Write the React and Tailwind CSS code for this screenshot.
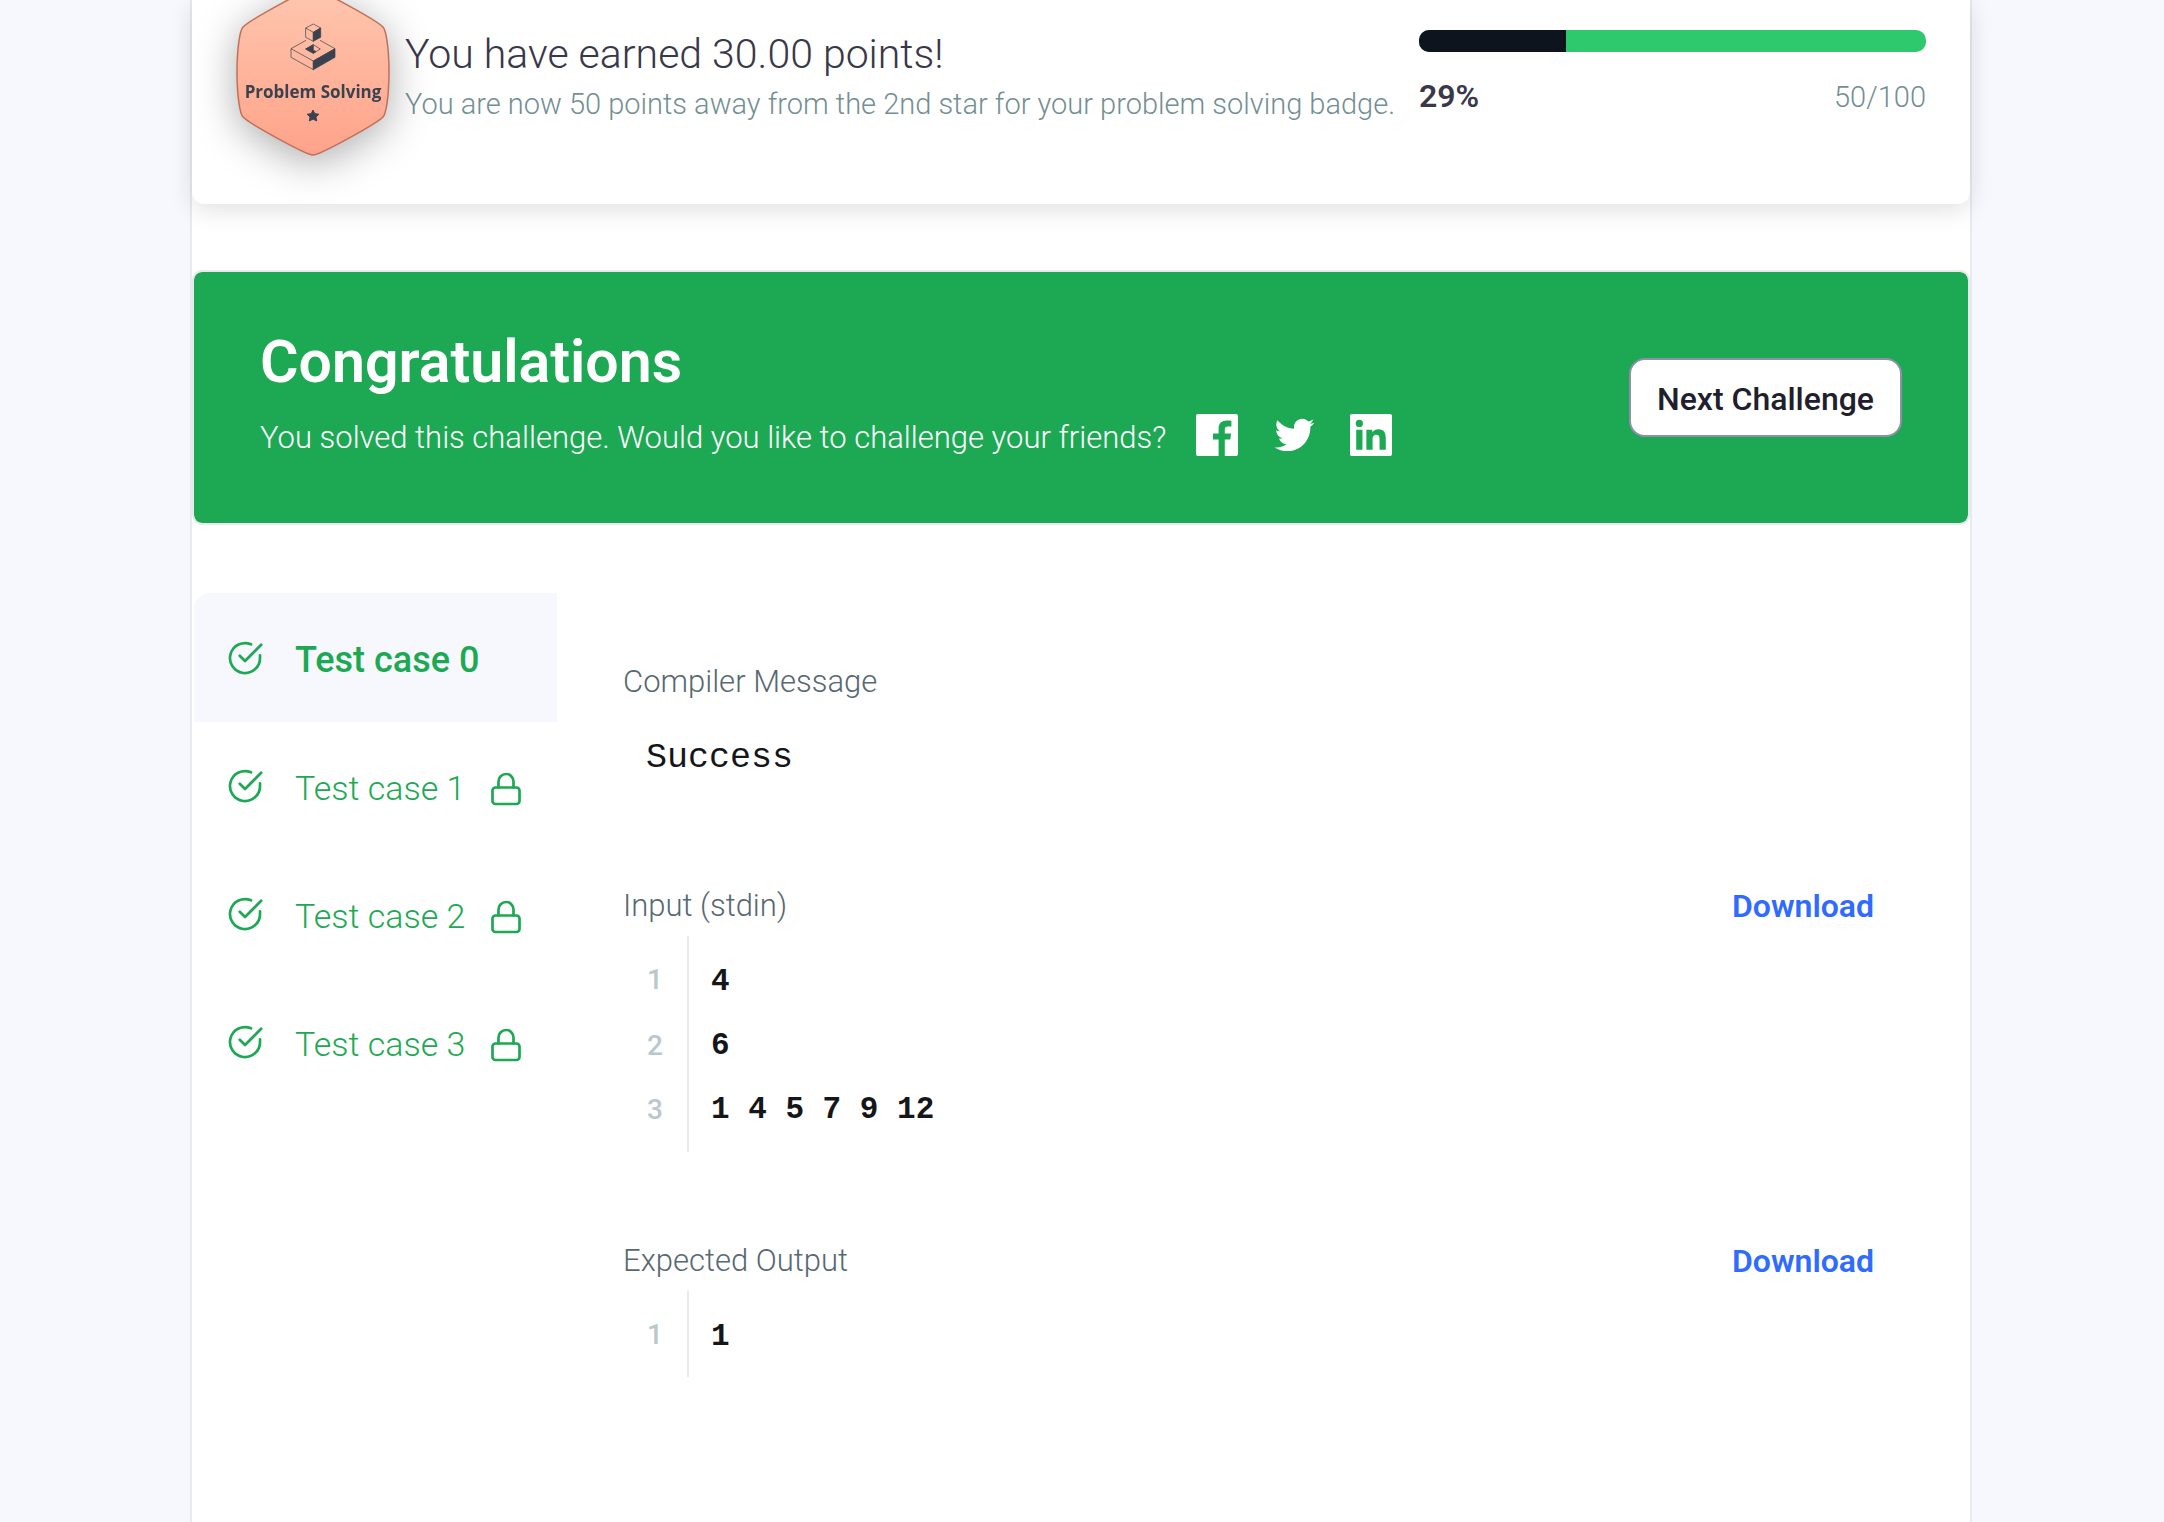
import React from "react";

const TEST_CASES = [
  { name: "Test case 0", active: true },
  { name: "Test case 1", locked: true },
  { name: "Test case 2", locked: true },
  { name: "Test case 3", locked: true },
];

function ProblemSolvingBadge() {
  return (
    <svg
      viewBox="0 0 154 168"
      className="-mt-3 h-[168px] w-[154px] shrink-0 overflow-visible drop-shadow-[0_8px_20px_rgba(0,0,0,0.32)]"
      role="img"
      aria-label="Problem Solving badge, one star"
    >
      <defs>
        <linearGradient id="badge-fill" x1="0" y1="0" x2="0" y2="1">
          <stop offset="0" stopColor="#ffc6ae" />
          <stop offset="1" stopColor="#ffa38a" />
        </linearGradient>
      </defs>
      <path
        d="M77 1C84 1 140 32 147 39C150 42 153 60 153 84C153 108 150 126 147 129C140 136 84 167 77 167C70 167 14 136 7 129C4 126 1 108 1 84C1 60 4 42 7 39C14 32 70 1 77 1Z"
        fill="url(#badge-fill)"
        stroke="#c0705a"
        strokeWidth="1.5"
      />
      <g stroke="#39424e" strokeWidth="0.7" strokeLinejoin="round" fill="none">
        <path d="M70 52.3L55 60.7V69.3L77.3 81.7V73L55 60.7M77.3 73L99 60.7L84 52.3" />
        <path d="M77.3 73L99 60.7V69.3L77.3 81.7Z" fill="#39424e" />
        <path d="M77.3 56.7L84.3 61L77.3 65.3L69.7 61Z" />
        <path d="M77.3 56.7V62L80 63.7L77.3 65.3L69.7 61Z" fill="#39424e" />
        <path d="M77.3 36L84.7 40L77.3 44.3L69.7 40ZM69.7 40V49.3L77.3 53.3V44.3" />
        <path d="M77.3 44.3L84.7 40V49.3L77.3 53.3Z" fill="#39424e" />
      </g>
      <text
        x="77"
        y="110"
        textAnchor="middle"
        fill="#39424e"
        className="font-['Open_Sans',sans-serif] text-[17px] font-bold"
      >
        Problem Solving
      </text>
      <path
        d="M77 122L78.8 125.7L82.9 126.2L79.9 129L80.7 133L77 131L73.3 133L74.1 129L71.1 126.2L75.2 125.7Z"
        fill="#39424e"
        stroke="#39424e"
        strokeLinejoin="round"
      />
    </svg>
  );
}

function FacebookIcon() {
  return (
    <svg viewBox="0 0 42 42" className="size-[42px]" fill="#fff" aria-hidden="true">
      <path d="M2 0H40A2 2 0 0 1 42 2V40A2 2 0 0 1 40 42H28.8V25.6H34.3L35.1 19.4H28.8V15.4C28.8 13.4 29.5 12.4 32 12.4H35.4V6.7C34.8 6.6 32.7 6.4 30.5 6.4C25.7 6.4 22.6 9.3 22.6 14.5V19.4H17V25.6H22.6V42H2A2 2 0 0 1 0 40V2A2 2 0 0 1 2 0Z" />
    </svg>
  );
}

function TwitterIcon() {
  return (
    <svg viewBox="0 0 24 24" className="size-[42px]" fill="#fff" aria-hidden="true">
      <path d="M23.643 4.937c-.835.37-1.732.62-2.675.733.962-.576 1.7-1.49 2.048-2.578-.9.534-1.897.922-2.958 1.13-.85-.904-2.06-1.47-3.4-1.47-2.572 0-4.658 2.086-4.658 4.66 0 .364.042.718.12 1.06-3.873-.195-7.304-2.05-9.602-4.868-.4.69-.63 1.49-.63 2.342 0 1.616.823 3.043 2.072 3.878-.764-.025-1.482-.234-2.11-.583v.06c0 2.257 1.605 4.14 3.737 4.568-.392.106-.803.162-1.227.162-.3 0-.593-.028-.877-.082.593 1.85 2.313 3.198 4.352 3.234-1.595 1.25-3.604 1.995-5.786 1.995-.376 0-.747-.022-1.112-.065 2.062 1.323 4.51 2.093 7.14 2.093 8.57 0 13.255-7.098 13.255-13.254 0-.2-.005-.402-.014-.602.91-.658 1.7-1.477 2.323-2.41z" />
    </svg>
  );
}

function LinkedinIcon() {
  return (
    <svg viewBox="0 0 24 24" className="size-[42px]" fill="#fff" aria-hidden="true">
      <path d="M20.447 20.452h-3.554v-5.569c0-1.328-.027-3.037-1.852-3.037-1.853 0-2.136 1.445-2.136 2.939v5.667H9.351V9h3.414v1.561h.046c.477-.9 1.637-1.85 3.37-1.85 3.601 0 4.267 2.37 4.267 5.455v6.286zM5.337 7.433a2.062 2.062 0 1 1 0-4.125 2.062 2.062 0 0 1 0 4.125zM7.119 20.452H3.555V9h3.564v11.452zM22.8 0H1.2C.5 0 0 .5 0 1.2v21.6c0 .7.5 1.2 1.2 1.2h21.6c.7 0 1.2-.5 1.2-1.2V1.2c0-.7-.5-1.2-1.2-1.2z" />
    </svg>
  );
}

function CheckIcon() {
  return (
    <svg
      viewBox="0 0 24 24"
      className="size-9 shrink-0"
      fill="none"
      stroke="currentColor"
      strokeWidth="1.8"
      strokeLinecap="round"
      strokeLinejoin="round"
      aria-hidden="true"
    >
      <path d="M22 10.3V12A10 10 0 1 1 16 2.9" />
      <path d="M8.5 10.5L12 14L22.8 3.2" />
    </svg>
  );
}

function LockIcon() {
  return (
    <svg
      viewBox="0 0 24 24"
      className="mt-1.5 size-9 shrink-0"
      fill="none"
      stroke="currentColor"
      strokeWidth="1.8"
      strokeLinecap="round"
      strokeLinejoin="round"
      aria-label="Locked"
    >
      <rect x="3" y="11" width="18" height="11" rx="2" />
      <path d="M7 11V7a5 5 0 0 1 10 0v4" />
    </svg>
  );
}

function CodeBlock({ lines }) {
  return (
    <div className="mt-2.5 flex flex-col">
      {lines.map((line, i) => (
        <div key={i} className="group flex items-stretch leading-[64px]">
          <span className="w-[66px] border-r-2 border-[#e4ebee] text-center text-[28px] font-medium text-[#b7c9cc] group-first:pt-3 group-last:pb-2.5">
            {i + 1}
          </span>
          <code className="pl-[22px] font-['Liberation_Mono',monospace] text-[31px] font-bold whitespace-pre text-[#15161a] group-first:pt-3.5 group-last:pb-2">
            {line}
          </code>
        </div>
      ))}
    </div>
  );
}

function IoSection({ title, lines, className }) {
  return (
    <section className={className}>
      <div className="flex items-center justify-between leading-10">
        <h3 className="text-[31px] font-light text-[#576871]">{title}</h3>
        <a href="#download" className="text-[32px] font-semibold text-[#2f6bff]">
          Download
        </a>
      </div>
      <CodeBlock lines={lines} />
    </section>
  );
}

export default function App() {
  return (
    <div className="min-h-screen bg-[#f7f8fe] pr-48 pl-[190px] font-['Roboto',sans-serif]">
      <main className="min-h-screen border-x-2 border-[#e9e9f3] bg-white pb-36">
        <header className="relative flex h-[204px] items-start rounded-b-xl bg-white px-11 shadow-[0_6px_24px_rgba(0,0,0,0.12)]">
          <ProblemSolvingBadge />
          <div className="flex-1 pt-[29px] pl-[15px] leading-[50px] whitespace-nowrap">
            <h1 className="text-[41px] font-light text-[#39374a]">You have earned 30.00 points!</h1>
            <p className="text-[29px] font-light text-[#738f93]">
              You are now 50 points away from the 2nd star for your problem solving badge.
            </p>
          </div>
          <div className="w-[507px] shrink-0 pt-[30px]">
            <div
              role="progressbar"
              aria-label="Progress to the next star"
              aria-valuenow={29}
              aria-valuemin={0}
              aria-valuemax={100}
              className="h-[22px] overflow-hidden rounded-[10px] bg-[#2ec96d]"
            >
              <div className="h-full w-[29%] bg-[#0e141e]" />
            </div>
            <div className="mt-6 flex items-baseline justify-between leading-10">
              <span className="text-[32px] font-semibold text-[#39374a]">29%</span>
              <span className="text-[29px] font-light text-[#738f93]">50/100</span>
            </div>
          </div>
        </header>

        <section className="mt-[66px] flex items-center justify-between rounded-[10px] border-2 border-[#e8e9ef] bg-[#1da954] bg-clip-padding px-[66px] text-white">
          <div className="pt-[54px] pb-[61px]">
            <h2 className="text-[59px] leading-[72px] font-semibold">Congratulations</h2>
            <div className="mt-4 flex items-start">
              <p className="text-[31px] leading-[48px] font-light">
                You solved this challenge. Would you like to challenge your friends?
              </p>
              <div className="ml-[30px] flex gap-[35px]">
                <a href="#facebook" aria-label="Share on Facebook">
                  <FacebookIcon />
                </a>
                <a href="#twitter" aria-label="Share on Twitter">
                  <TwitterIcon />
                </a>
                <a href="#linkedin" aria-label="Share on LinkedIn">
                  <LinkedinIcon />
                </a>
              </div>
            </div>
          </div>
          <button
            type="button"
            className="h-[79px] rounded-2xl border-2 border-[#918fa8] bg-white px-[26px] pt-0.5 text-[32px] font-medium text-[#20202c]"
          >
            Next Challenge
          </button>
        </section>

        <div className="mt-[68px] flex items-start pl-0.5">
          <div role="tablist" aria-label="Test cases" className="flex w-[363px] shrink-0 flex-col">
            {TEST_CASES.map((test) => (
              <button
                key={test.name}
                type="button"
                role="tab"
                aria-selected={!!test.active}
                className={
                  "flex items-center pl-[33px] text-[#1da954] " +
                  (test.active
                    ? "h-[129px] rounded-tl-2xl bg-[#f7f8fd] text-[36px] font-medium"
                    : "h-32 text-[34px] font-light")
                }
              >
                <CheckIcon />
                <span className="ml-8 w-[193px] pt-1 text-left">{test.name}</span>
                {test.locked && <LockIcon />}
              </button>
            ))}
          </div>

          <div className="flex-1 pt-[69px] pr-24 pl-[66px]">
            <section>
              <h3 className="text-[31px] leading-10 font-light text-[#576871]">Compiler Message</h3>
              <pre className="mt-8 pl-[23px] font-['Liberation_Mono',monospace] text-[35px] leading-[48px] text-[#15161a]">
                Success
              </pre>
            </section>
            <IoSection className="mt-[104px]" title="Input (stdin)" lines={["4", "6", "1 4 5 7 9 12"]} />
            <IoSection className="mt-[89px]" title="Expected Output" lines={["1"]} />
          </div>
        </div>
      </main>
    </div>
  );
}
